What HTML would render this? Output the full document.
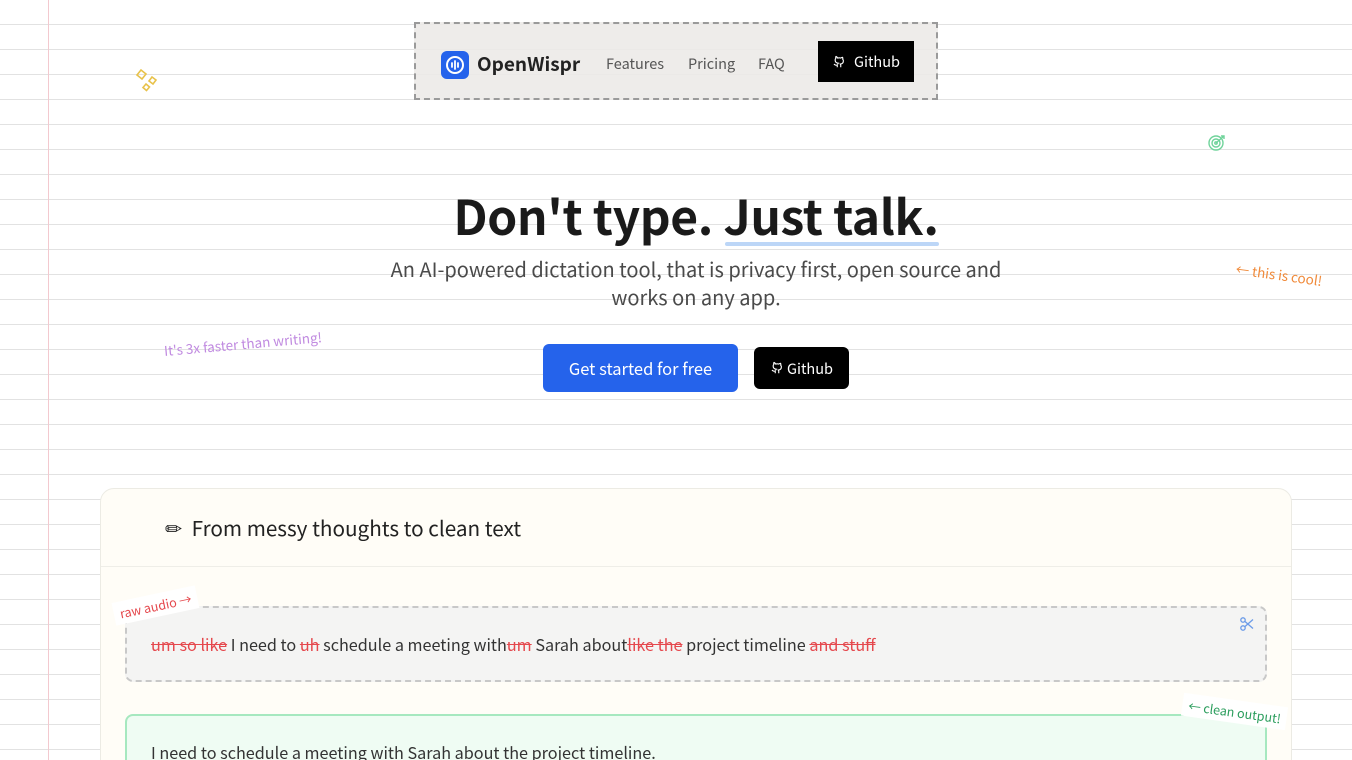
<!DOCTYPE html>
<html><head><meta charset="utf-8"><style>
*{margin:0;padding:0;box-sizing:border-box}
html,body{width:1352px;height:760px;overflow:hidden}
body{position:relative;font-family:"Noto Sans CJK SC","Liberation Sans",sans-serif;color:#1f1f1f;
background:#fff repeating-linear-gradient(to bottom,transparent 0,transparent 24px,#e2e2e2 24px,#e2e2e2 25px);}
.margin{position:absolute;left:48px;top:0;width:1px;height:760px;background:#f3c9cf}
.abs{position:absolute}
nav{position:absolute;left:414px;top:22px;width:524px;height:78px;border:2px dashed #9a9a9a;background:rgba(236,234,232,.9)}
.logo{position:absolute;left:25px;top:27px;width:28px;height:28px;border-radius:6px;background:#2563eb}
.brand{position:absolute;left:61px;top:26px;font-size:19px;font-weight:600;color:#222}
.nl{position:absolute;top:29px;font-size:14.5px;color:#555}
.gh{position:absolute;left:402px;top:17px;width:96px;height:41px;background:#000;color:#fff;font-size:14.5px;display:flex;align-items:center;justify-content:center;gap:8px}
h1{position:absolute;left:0;width:1392px;top:179px;text-align:center;font-size:48px;font-weight:700;color:#1a1a1a;letter-spacing:-.4px}
.sub{position:absolute;left:376px;width:640px;top:255px;text-align:center;font-size:20px;line-height:28px;color:#4a4a4a;padding:0 8px}
.btn1{position:absolute;left:543px;top:344px;width:195px;height:48px;border-radius:6px;background:#2563eb;color:#fff;font-size:16.5px;display:flex;align-items:center;justify-content:center}
.btn2{position:absolute;left:754px;top:347px;width:95px;height:42px;border-radius:6px;background:#000;color:#fff;font-size:14.5px;display:flex;align-items:center;justify-content:center;gap:3px}
.card{position:absolute;left:100px;top:488px;width:1192px;height:300px;border:1px solid #ecebe4;border-radius:14px;background:#fffdf7}
.card .hd{height:78px;border-bottom:1px solid #efeee8;font-size:20.7px;padding:23px 0 0 64px;color:#222}
.raw{position:absolute;left:125px;top:606px;width:1142px;height:76px;border:2px dashed #c8c8c8;border-radius:8px;background:#f4f4f3;padding:24px 0 0 24px;font-size:16.2px;color:#333}
.raw s{color:#e5484d;text-decoration-color:#e5484d}
.clean{position:absolute;left:125px;top:714px;width:1142px;height:80px;border:2px solid #a6e8bf;border-radius:8px;background:#effcf3;padding:24px 0 0 24px;font-size:16.2px;color:#333}
.tag{position:absolute;font-size:12.5px;background:#fff;padding:2px 6px}
</style></head><body>
<div class="margin"></div>
<nav>
<div class="logo"><svg width="28" height="28" viewBox="0 0 28 28"><circle cx="14" cy="14" r="8" fill="none" stroke="#fff" stroke-width="2"/><path d="M11 12v4M14 10v8M17 12v4" stroke="#fff" stroke-width="1.8" stroke-linecap="round"/></svg></div>
<div class="brand">OpenWispr</div>
<div class="nl" style="left:190px">Features</div>
<div class="nl" style="left:272px">Pricing</div>
<div class="nl" style="left:342px">FAQ</div>
<div class="gh"><svg width="14" height="14" viewBox="0 0 16 16"><path d="M6 14v-2.5c-3 .6-3.5-1.3-3.5-1.3M10 14v-2.3c0-.6-.2-1-.5-1.3 1.7-.2 3.5-.8 3.5-3.7 0-.8-.3-1.5-.8-2 .1-.2.3-1-.1-2 0 0-.6-.2-2 .8a7 7 0 00-3.6 0C5.1 1.5 4.5 1.7 4.5 1.7c-.4 1-.2 1.8-.1 2-.5.5-.8 1.2-.8 2 0 2.9 1.8 3.5 3.5 3.7-.3.3-.5.7-.5 1.3" fill="none" stroke="#fff" stroke-width="1.3"/></svg>Github</div>
</nav>
<svg class="abs" style="left:132px;top:66px" width="32" height="32" viewBox="0 0 32 32"><g fill="none" stroke="#e8c24a" stroke-width="1.6"><path d="M9 4l5 4-4 5-5-4z"/><path d="M20 11l4 3-3 4-4-3z"/><path d="M14 18l3.5 3-3 3.5-3.5-3z"/></g></svg>
<svg class="abs" style="left:1207px;top:133px" width="20" height="20" viewBox="0 0 20 20"><g fill="none" stroke="#6fd39a" stroke-width="1.4"><circle cx="9" cy="10" r="7"/><circle cx="9" cy="10" r="4"/><circle cx="9" cy="10" r="1.2"/><path d="M9 10l8-7M14 3h3v3"/></g></svg>
<h1>Don't type. <span style="position:relative">Just talk.<span style="position:absolute;left:2px;right:0;bottom:3px;height:4px;border-radius:3px;background:#bcd6f7"></span></span></h1>
<div class="sub">An AI-powered dictation tool, that is privacy first, open source and works on any app.</div>
<div class="abs" style="left:164px;top:340px;font-size:13.5px;color:#c08ae0;transform:rotate(-5deg);transform-origin:left">It's 3x faster than writing!</div>
<div class="abs" style="left:1236px;top:258px;font-size:13.5px;color:#f08a3a;transform:rotate(8deg);transform-origin:left">← this is cool!</div>
<div class="btn1">Get started for free</div>
<div class="btn2"><svg width="14" height="14" viewBox="0 0 16 16"><path d="M6 14v-2.5c-3 .6-3.5-1.3-3.5-1.3M10 14v-2.3c0-.6-.2-1-.5-1.3 1.7-.2 3.5-.8 3.5-3.7 0-.8-.3-1.5-.8-2 .1-.2.3-1-.1-2 0 0-.6-.2-2 .8a7 7 0 00-3.6 0C5.1 1.5 4.5 1.7 4.5 1.7c-.4 1-.2 1.8-.1 2-.5.5-.8 1.2-.8 2 0 2.9 1.8 3.5 3.5 3.7-.3.3-.5.7-.5 1.3" fill="none" stroke="#fff" stroke-width="1.3"/></svg>Github</div>
<div class="card"><div class="hd">✏&nbsp; From messy thoughts to clean text</div></div>
<div class="raw"><s>um so like</s> I need to <s>uh</s> schedule a meeting with<s>um</s> Sarah about<s>like the</s> project timeline <s>and stuff</s>
<svg style="position:absolute;right:10px;top:8px" width="16" height="16" viewBox="0 0 16 16"><g fill="none" stroke="#6b9be8" stroke-width="1.3"><circle cx="4" cy="4" r="2.2"/><circle cx="4" cy="12" r="2.2"/><path d="M6 5.5l8 7M6 10.5l8-7"/></g></svg></div>
<div class="tag" style="left:113px;top:594px;color:#e5484d;transform:rotate(-12deg)">raw audio →</div>
<div class="clean">I need to schedule a meeting with Sarah about the project timeline.</div>
<div class="tag" style="left:1182px;top:700px;color:#2a9d5c;transform:rotate(8deg)">← clean output!</div>
</body></html>
